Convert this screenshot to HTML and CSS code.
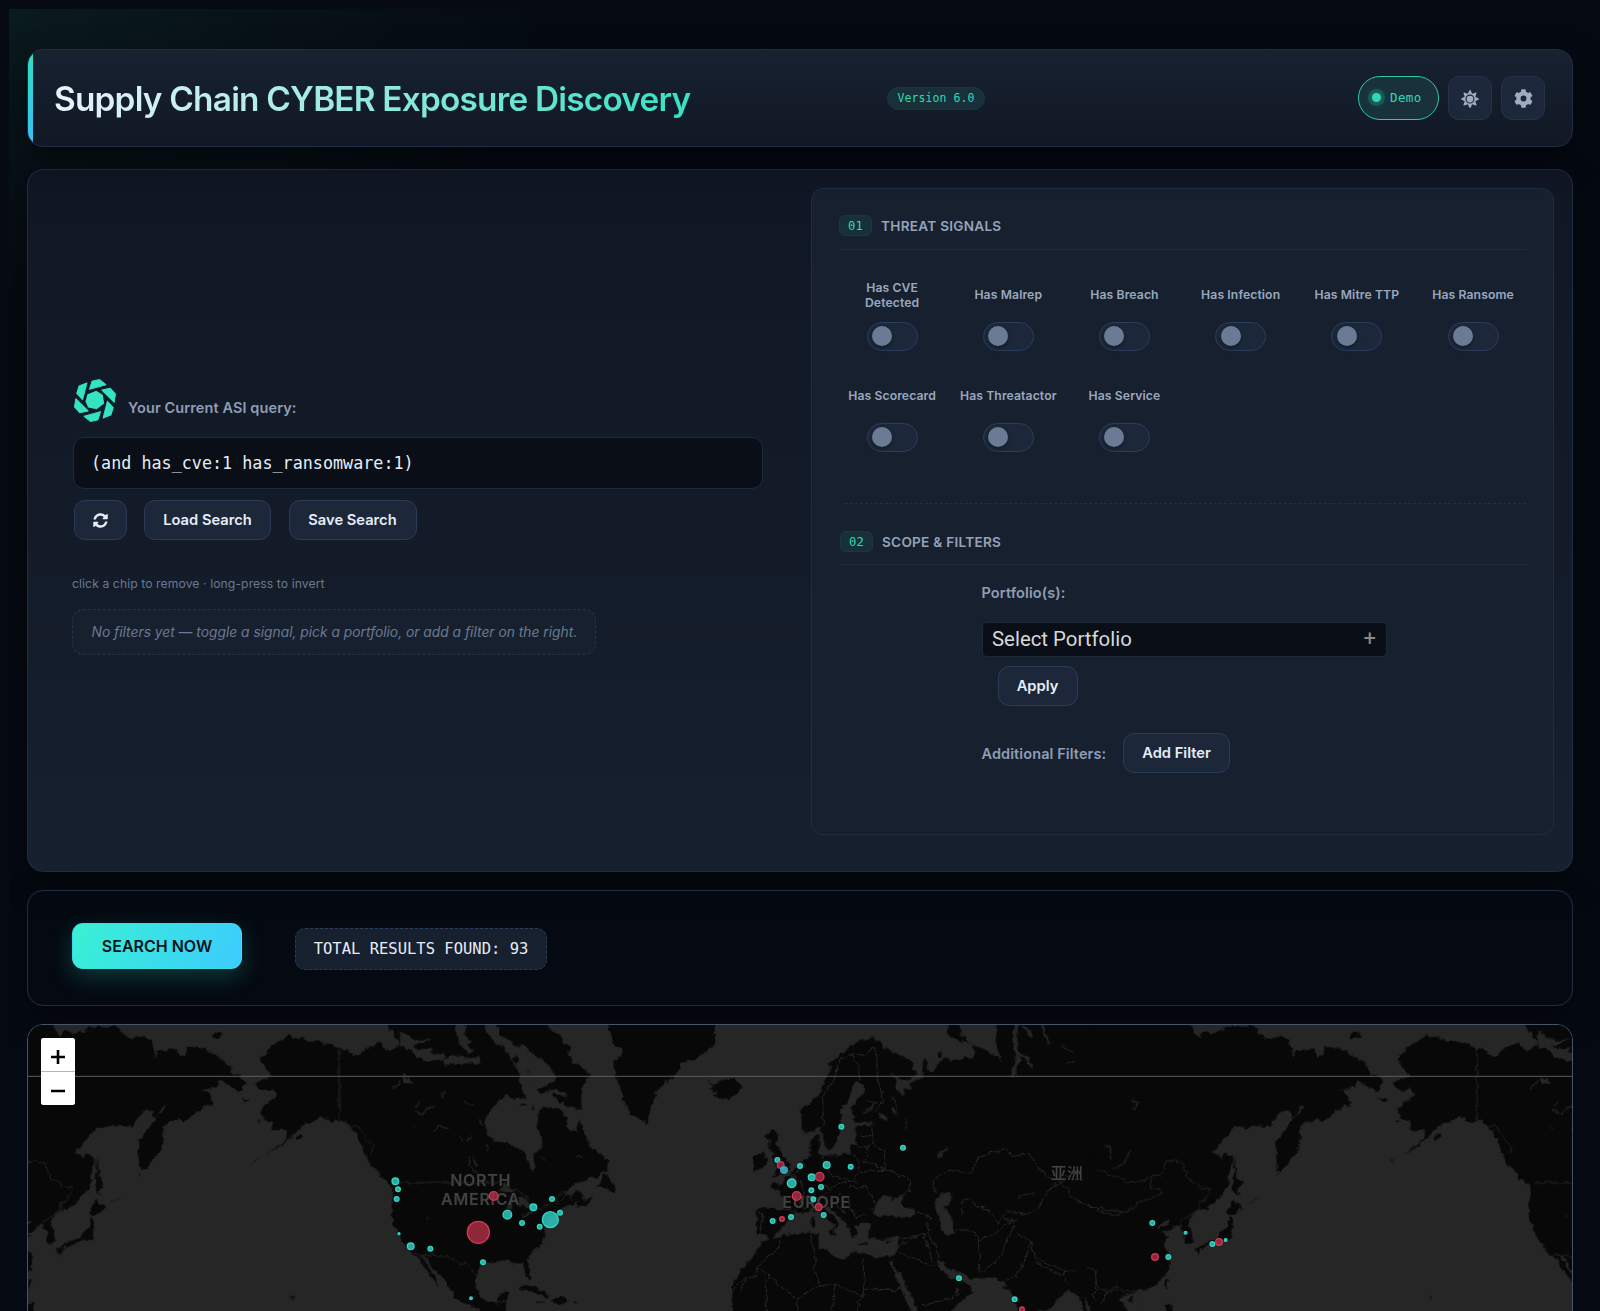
FILE: index.html
```html
<!DOCTYPE html>
<html lang="en">
<head>
<meta charset="utf-8">
<title>Supply Chain CYBER Exposure Discovery</title>
<link rel="stylesheet" href="styles.css">
</head>
<body>
<div class="page">
  <header class="card topbar">
    <h1 class="title">Supply Chain CYBER Exposure Discovery</h1>
    <span class="version">Version 6.0</span>
    <div class="actions">
      <button class="demo"><i class="dot"></i>Demo</button>
      <button class="icon-btn" aria-label="Theme">
        <svg width="18" height="18" viewBox="0 0 512 512"><path fill="currentColor" d="M256 160a96 96 0 1 0 0 192 96 96 0 0 0 0-192zm246 81-95-47 34-101c4-13-8-26-22-22l-101 34-47-95c-6-12-24-12-30 0l-47 95L93 71c-13-4-26 8-22 22l34 101-95 47c-12 6-12 24 0 30l95 47L71 419c-4 13 8 26 22 22l101-34 47 95c6 12 24 12 30 0l47-95 101 34c13 4 26-8 22-22l-34-101 95-47c12-6 12-24 0-30zM346 346a128 128 0 1 1-181-181 128 128 0 0 1 181 181z"/></svg>
      </button>
      <button class="icon-btn" aria-label="Settings">
        <svg width="19" height="19" viewBox="0 0 512 512"><path fill="currentColor" d="M487 316l-42-25c4-23 4-47 0-70l42-25c5-3 8-9 6-14-11-36-30-68-55-95-4-4-10-5-15-2l-42 25c-18-15-39-27-61-35V26c0-6-4-11-10-12-37-8-75-8-110 0-5 1-9 6-9 12v49c-22 8-43 20-61 35L88 85c-5-3-11-2-15 2-25 27-44 59-55 95-2 5 1 11 6 14l42 25c-4 23-4 47 0 70l-42 25c-5 3-8 9-6 14 11 36 30 68 55 95 4 4 10 5 15 2l42-25c18 15 39 27 61 35v49c0 6 4 11 10 12 37 8 75 8 110 0 5-1 9-6 9-12v-49c22-8 43-20 61-35l42 25c5 3 11 2 15-2 25-27 44-59 55-95 2-5-1-11-6-14zM256 336a80 80 0 1 1 0-160 80 80 0 0 1 0 160z"/></svg>
      </button>
    </div>
  </header>

  <main class="card workspace">
    <section class="query">
      <div class="query-head">
        <svg class="logo" viewBox="25 22 134 136" width="44" height="45">
          <g fill="#34e3c2">
            <path id="blade" stroke="#34e3c2" stroke-width="3" stroke-linejoin="round" d="M75 56 83 31 106 26 126 42z"/>
            <use href="#blade" transform="rotate(60 92 90)"/>
            <use href="#blade" transform="rotate(120 92 90)"/>
            <use href="#blade" transform="rotate(180 92 90)"/>
            <use href="#blade" transform="rotate(240 92 90)"/>
            <use href="#blade" transform="rotate(300 92 90)"/>
            <path d="M69 71 96 60 116 73 120 99 97 117 71 111 63 92z"/>
          </g>
        </svg>
        <span class="label">Your Current ASI query:</span>
      </div>
      <div class="query-box">(and has_cve:1 has_ransomware:1)</div>
      <div class="query-buttons">
        <button class="btn refresh" aria-label="Refresh">
          <svg width="15" height="15" viewBox="0 0 512 512"><path fill="currentColor" d="M371 141a160 160 0 0 0-272 75c-1 5-6 9-12 9H30c-8 0-13-7-12-14C39 95 137 8 256 8c67 0 127 26 172 69l35-35c15-15 41-4 41 17v129c0 13-11 24-24 24H351c-21 0-32-26-17-41zM32 300h129c21 0 32 26 17 41l-37 30a160 160 0 0 0 272-75c1-5 6-9 12-9h57c8 0 13 7 12 14-21 116-119 203-238 203-67 0-127-26-172-69l-35 35c-15 15-41 4-41-17V324c0-13 11-24 24-24z"/></svg>
        </button>
        <button class="btn">Load Search</button>
        <button class="btn">Save Search</button>
      </div>
      <p class="hint">click a chip to remove · long-press to invert</p>
      <div class="empty">No filters yet — toggle a signal, pick a portfolio, or add a filter on the right.</div>
    </section>

    <section class="filters">
      <h2 class="section-head"><span class="num">01</span>THREAT SIGNALS</h2>
      <div class="signals">
        <label class="signal"><span>Has CVE Detected</span><i class="toggle"></i></label>
        <label class="signal"><span>Has Malrep</span><i class="toggle"></i></label>
        <label class="signal"><span>Has Breach</span><i class="toggle"></i></label>
        <label class="signal"><span>Has Infection</span><i class="toggle"></i></label>
        <label class="signal"><span>Has Mitre TTP</span><i class="toggle"></i></label>
        <label class="signal"><span>Has Ransome</span><i class="toggle"></i></label>
        <label class="signal"><span>Has Scorecard</span><i class="toggle"></i></label>
        <label class="signal"><span>Has Threatactor</span><i class="toggle"></i></label>
        <label class="signal"><span>Has Service</span><i class="toggle"></i></label>
      </div>
      <hr class="dash">
      <h2 class="section-head second"><span class="num">02</span>SCOPE &amp; FILTERS</h2>
      <div class="scope">
        <span class="label">Portfolio(s):</span>
        <div class="select"><span>Select Portfolio</span><span class="plus">+</span></div>
        <button class="btn apply">Apply</button>
        <div class="more"><span class="label">Additional Filters:</span><button class="btn">Add Filter</button></div>
      </div>
    </section>
  </main>

  <section class="card results">
    <button class="search">SEARCH NOW</button>
    <div class="total">TOTAL RESULTS FOUND: 93</div>
  </section>

  <section class="map">
    <svg class="world" width="1544" height="286" viewBox="84 45 4632 858">
      <defs>
        <filter id="coast" filterUnits="userSpaceOnUse" x="60" y="20" width="4680" height="910" color-interpolation-filters="sRGB">
          <feTurbulence type="fractalNoise" baseFrequency=".055" numOctaves="2" seed="4"/>
          <feDisplacementMap in="SourceGraphic" scale="19" xChannelSelector="R" yChannelSelector="G"/>
        </filter>
        <g id="asia">
          <g class="land" transform="translate(3300)">
            <path d="M-30 20H270L270 40 285 75 297 85 305 65 320 60 330 72 360 68 375 50 430 50 470 50 475 70 500 85 545 78 568 90 572 115 583 148 585 120 640 118 655 138 672 135 670 110 720 115 760 135 800 165 812 198 825 190 850 215 835 245 825 245 800 225 770 210 765 230 730 238 708 243 730 242 745 260 755 288 735 285 700 310 668 335 650 328 625 335 605 345 600 370 603 400 585 430 570 450 555 470 540 488 530 460 528 420 530 395 555 360 585 320 600 305 615 287 603 288 585 320 572 325 572 300 550 300 520 330 515 350 470 345 440 352 405 350 370 390 338 428 355 435 365 445 370 430 395 440 400 455 390 480 385 520 365 555 320 598 295 600 270 625 265 640 275 670 280 695 252 700 255 665 240 655 245 640 225 650 210 665 178 665 180 652 205 640 208 630 180 640 170 655 190 670 205 680 187 697 200 720 212 745 205 780 190 800 170 825 130 840 90 850 75 855 55 870 80 903V930H-30z"/>
            <path d="M405 438 410 500 426 520 410 540 416 557 398 540 402 480zM381 610 400 570 430 595 405 611 390 615zM385 620 395 625 399 655 388 690 360 690 330 705 300 715 296 740 283 720 320 695 350 685 365 665 380 655zM195 838 197 810 208 805 200 835zM195 915V880L212 875 215 915zM82 868 100 858 104 866 92 877zM750 75 765 65 783 74 770 83 752 84zM835 263 855 268 865 273 850 274zM525 500 535 490 537 495zM440 580 480 560 455 575zM985 855 995 862 990 867z"/>
          </g>
          <g class="line" transform="translate(3300)">
            <path d="M-10 480 20 485 25 498 55 500 85 515 130 512 155 500 180 498 192 480 195 455 225 450 250 465 265 505 290 520 305 535 330 530 325 550 310 575 296 575 296 600 240 635M155 505 150 530 180 540 188 550 140 570 110 580 105 595 75 605 45 616-10 600M-10 830 20 845 50 828 70 845 130 840"/>
            <path class="lake" d="M40 478 70 462 93 418M15 405 30 410 35 450M95 270 115 280 100 300"/>
          </g>
        </g>
        <g id="america">
          <path class="land" d="M778 145 800 130 815 105 850 90 868 72 880 85 905 80 925 95 960 95 990 105 1018 115 1040 120 1062 138 1080 135 1095 115 1125 105 1140 95 1150 110 1170 125 1200 100 1185 75 1160 47V20H1640L1650 60 1680 75 1690 100 1715 110 1705 130 1720 155 1770 190 1755 220 1742 235 1745 300 1720 280 1690 245 1640 235 1670 200 1640 160 1600 130 1560 100 1590 170 1580 195 1555 210 1575 262 1540 270 1520 255 1480 285 1458 320 1455 355 1478 388 1510 395 1550 410 1575 430 1585 460 1600 485 1605 470 1600 430 1625 415 1628 390 1610 350 1618 300 1630 290 1680 300 1700 320 1695 340 1712 365 1730 362 1740 330 1755 370 1770 410 1800 430 1825 450 1823 475 1790 500 1730 515 1690 560 1660 595 1700 555 1740 540 1752 570 1780 560 1760 588 1728 593 1735 575 1700 590 1680 600 1650 625 1630 655 1636 680 1625 705 1595 725 1582 740 1590 780 1593 800 1585 808 1570 780 1570 760 1545 760 1520 750 1490 755 1445 760 1430 785 1428 830 1440 855 1460 875 1490 875 1500 850 1528 845 1518 870 1518 920H1490L1430 895 1370 870 1355 845 1325 800 1295 770 1275 740 1262 735 1285 770 1305 800 1315 827 1290 800 1270 770 1260 745 1235 735 1225 718 1200 685 1185 655 1176 630 1175 580 1180 540 1177 530 1145 495 1110 465 1095 430 1070 375 1045 345 1025 332 1000 335 960 318 945 335 915 340 890 365 860 395 830 415 795 435 860 390 862 362 850 358 820 362 815 335 790 330 780 305 795 280 830 258 820 238 780 240 762 220 790 210 815 200 790 165z"/>
          <path class="land" d="M1140 490 1175 510 1192 528 1187 540 1160 515 1140 497zM888 380 905 372 908 382 895 392zM725 265 750 270 740 274zM770 332 785 330 780 338zM755 458 775 445 765 455zM1615 235 1640 225 1655 240 1630 250 1615 245zM1655 250 1700 260 1742 300 1700 290 1665 265zM1592 290 1602 288 1600 303zM1560 285 1575 280 1577 290zM1793 530 1815 490 1830 505 1850 540 1840 550 1820 535zM1555 838 1580 825 1610 835 1650 858 1640 865 1600 845zM1655 865 1690 862 1705 875 1680 880 1655 878zM1612 875h20v5h-20zM1715 875h15v5h-15zM635 75 655 65 670 73 650 84z"/>
          <path class="land" d="M1835 20 1828 60 1840 100 1870 130 1843 155 1848 200 1860 230 1870 270 1890 310 1910 323 1942 340 1955 280 1972 235 2000 215 2030 190 2048 155 2090 147 2120 125 2148 100 2140 20zM2120 208 2145 225 2160 215 2200 203 2225 230 2210 253 2175 268 2145 260 2150 245 2125 238 2142 230z"/>
          <path class="water" d="M1200 60 1235 85 1260 92 1300 85 1270 100 1240 108 1255 120 1300 112 1290 128 1340 130 1330 150 1290 155 1250 140 1230 115 1200 110zM1365 40H1400L1395 70 1415 95 1400 105 1425 120 1410 130 1385 110 1370 80zM1330 150 1360 135 1400 145 1440 140 1445 160 1400 160 1340 165zM1450 40H1490L1500 75 1530 90 1545 110 1570 105 1595 150 1590 185 1565 175 1540 165 1520 120 1490 100 1460 70zM1550 165 1580 180 1590 230 1560 215zM1205 195 1230 205 1240 220 1215 225z"/>
          <path class="land" d="M1535 145 1550 138 1557 155 1545 165zM1505 100 1515 110 1510 125zM1410 70 1425 80 1420 90z"/>
          <path class="lake" d="M1245 305 1270 310 1290 292 1305 290M1260 275 1250 290M1300 362 1320 350 1345 352M1405 445 1415 475 1430 485M1418 445 1430 465M1380 380 1385 395M1415 375 1405 390M1325 260 1335 245M1395 275 1420 285M1625 440 1635 450M1730 440 1750 442M1285 620V625M1180 235 1200 215M1240 350V355M1460 405V420M1440 330 1450 345"/>
          <path class="water" d="M1495 540 1515 525 1545 540 1535 550 1510 545zM1530 560 1540 558 1535 600 1523 598zM1550 562 1570 560 1595 585 1580 595 1560 585zM1562 616 1600 605 1598 612 1572 620zM1600 600 1625 590 1622 598z"/>
          <path class="line" d="M1018 115V331L1035 335 1050 352 1070 345 1090 370 1120 410 1115 430M1190 518H1500L1550 540 1580 560 1600 605 1650 580 1690 545 1712 545 1715 570M1245 733 1325 740 1350 740 1380 765 1400 757 1425 795M1490 885 1495 875 1518 875M1690 550 1720 555"/>
        </g>
      </defs>
      <rect class="sea" x="84" y="45" width="4632" height="858"/>
      <g filter="url(#coast)">
        <g class="land" transform="translate(2220)">
          <path d="M375 92 400 82 425 98 430 112 445 118 470 130 500 145 522 165 525 190 515 207 490 208 460 197 445 190 470 210 465 235 490 258 490 235 515 240 512 220 540 205 550 205 548 150 565 148 560 170 570 190 585 188 590 165 605 158 620 138 640 155 660 145 700 145 708 125 690 100 740 122 785 152 770 110 766 70 782 20H1130V930H1030L1025 880 1010 855 990 840 950 870 920 905H835L820 870 817 842 790 835 800 822 760 803 690 805 665 785 630 780 605 755 592 750 600 775 630 810 650 808 660 795 670 815 700 845 670 870 650 890 630 905V930H540L520 870 490 810 465 770 462 742 470 720 478 680 430 690 388 685 385 660 395 640 360 638 345 650 350 670 340 685 330 660 310 630 265 590 245 582 265 605 295 635 288 655 275 668 285 645 245 615 222 590 200 605 165 605 150 620 135 645 115 660 95 687 72 672 50 675 50 640 50 600 60 590 130 600 138 570 115 545 90 530 100 520 125 525 142 500 165 475 195 445 215 435 210 395 235 370 240 400 232 425 245 437 290 435 330 430 335 405 350 400 345 360 355 350 405 342 375 335 345 335 336 315 338 290 370 250 372 225 345 215 325 270 300 300 303 340 290 395 265 425 250 390 240 350 205 370 185 355 183 295 240 255 255 215 278 170 262 160 290 145 330 110 360 88z"/>
          <path d="M78 688 160 672 240 670 235 710 280 735 310 750 335 725 380 735 410 742 465 738 480 830 525 930H-20L-25 830-5 790 45 735 65 700zM620 20H658L665 75 690 98 655 90 625 75zM75 375 100 362 118 370 105 400 125 430 150 465 140 488 100 500 112 475 95 445 105 430 85 415 90 390zM40 440 70 425 78 455 68 475 42 480zM590 130 605 125 605 140 592 142zM218 405 235 400 235 425zM265 660 288 668 285 680 260 668zM215 625 225 622 224 650 214 650zM218 600 225 600 224 618zM355 697 385 700 380 705 355 700zM432 695 455 690 440 702z"/>
        </g>
        <g class="water" transform="translate(2220)">
          <path d="M400 612 405 585 430 555 455 560 450 572 480 560 500 545 478 582 525 600 515 622 470 622 440 612 415 625zM582 575 610 548 635 550 632 575 613 590 640 630 642 672 615 675 600 650 598 620zM443 752 460 780 480 835 510 890 525 930H545L520 870 490 812 465 775 460 750zM1140 855 1180 845 1200 850V920H1040L1035 860 1060 905 1090 890 1130 915zM415 305 440 320 440 332 420 325zM455 290 475 315 455 305z"/>
          <path class="channel" d="M828 30 825 100 835 140 815 200"/>
          <path class="lake inlet" d="M850 50 875 75M835 140Q865 130 872 170M905 40 925 100M600 425 620 418M600 445V430"/>
          <path class="lake" d="M380 270 410 280 375 300M460 260 470 300M495 330V360M965 110 1000 125M980 155H1005M835 565 850 553 880 552M790 630 820 630M375 310 400 290"/>
        </g>
        <use href="#asia"/>
        <use href="#asia" x="-3413"/>
        <use href="#america"/>
        <use href="#america" x="3413"/>
        <path class="line" transform="translate(2220)" d="M250 350 248 260 280 210 300 150 330 130 355 165 360 210M330 130 375 140 395 110 410 130 412 200 430 270 405 310M335 405 380 410 400 400 395 345M360 375 395 380M325 432 352 440 355 495 335 515 265 490 250 460 250 440M380 410 385 440 370 455 440 480 430 420 405 408M360 485 440 480 510 510 505 545M330 530 380 530 405 580 395 600M270 540 290 520 350 515M190 455 180 480 150 500 180 515 190 545 180 580 200 600M245 520 270 540 250 560 190 560M320 560 330 590 345 620 380 615M300 550 290 590 320 610M60 600 70 620 60 670M120 595 165 603M145 495 170 505M530 600 575 625 560 640 570 680 590 720 595 755M580 545 580 510 630 480 690 490 715 440 800 418 820 440 865 430 910 490 965 515 980 500 1030 510M580 535 590 550M665 620V575L685 568 720 595 745 600 775 640 800 600 850 615 895 600 925 540 960 515 1010 575 1100 600 1150 605M645 660 690 660 715 680 720 790M715 690 760 675 800 640 830 630 790 710 775 750 730 785M830 670 870 695 860 740 830 800 800 810M870 695 890 750 980 785 1010 780M890 760 960 795 985 780M970 785 980 820M1040 770 1065 780 1070 820 1060 860 1085 880 1100 850 1130 840M480 685 520 680 550 670 580 760M480 730 500 735 580 770M470 710 540 675M650 830 655 855 600 875 545 885M370 740V860M370 838H485M225 715 225 795 240 825 285 825 370 860M120 690 110 720 50 770 50 800 20 805 0 845M50 770 170 868 240 825M75 805 80 905M285 825 275 905M20 800-25 845M360 860 355 905M210 675 215 700 225 715M170 868 175 905"/>
      </g>
      <path class="parallel" d="M84 199H4716"/>
      <g class="region">
        <text x="1442" y="529">NORTH</text>
        <text x="1442" y="586">AMERICA</text>
        <text x="2450" y="593">EUROPE</text>
        <text class="cjk" x="3201" y="507">亚洲</text>
      </g>
      <g class="hit">
        <circle cx="1186" cy="514" r="10"/><circle cx="1194" cy="538" r="7"/><circle cx="1190" cy="567" r="7"/><circle cx="1197" cy="671" r="3"/>
        <circle cx="1232" cy="709" r="10"/><circle cx="1291" cy="716" r="7"/><circle cx="1449" cy="757" r="7"/><circle cx="1413" cy="865" r="4"/>
        <circle cx="1522" cy="614" r="13"/><circle cx="1566" cy="639" r="7"/><circle cx="1600" cy="592" r="10"/><circle cx="1656" cy="567" r="7"/>
        <circle cx="1680" cy="608" r="7"/><circle cx="1651" cy="629" r="24"/><circle cx="1619" cy="650" r="7"/>
        <circle cx="2332" cy="450" r="7"/><circle cx="2400" cy="468" r="7"/><circle cx="2480" cy="465" r="10"/><circle cx="2552" cy="470" r="7"/>
        <circle cx="2524" cy="350" r="7"/><circle cx="2709" cy="413" r="7"/><circle cx="2375" cy="520" r="13"/><circle cx="2435" cy="502" r="10"/>
        <circle cx="2434" cy="541" r="7"/><circle cx="2463" cy="531" r="7"/><circle cx="2440" cy="568" r="7"/><circle cx="2471" cy="615" r="7"/>
        <circle cx="2318" cy="633" r="7"/><circle cx="2373" cy="621" r="7"/><circle cx="2877" cy="805" r="7"/><circle cx="3044" cy="868" r="7"/>
        <circle cx="3457" cy="639" r="7"/><circle cx="3557" cy="668" r="4"/><circle cx="3505" cy="741" r="7"/><circle cx="3637" cy="702" r="7"/><circle cx="3677" cy="690" r="4"/>
      </g>
      <g class="alert">
        <circle cx="1435" cy="667" r="33"/><circle cx="1481" cy="558" r="13"/><circle cx="2342" cy="465" r="10"/><circle cx="2390" cy="558" r="13"/>
        <circle cx="2459" cy="500" r="13"/><circle cx="2456" cy="591" r="10"/><circle cx="2346" cy="627" r="7"/><circle cx="3465" cy="741" r="10"/>
        <circle cx="3657" cy="696" r="10"/><circle cx="3066" cy="898" r="7"/>
      </g>
      <circle class="blue" cx="2352" cy="480" r="10"/>
    </svg>
    <div class="zoom">
      <button aria-label="Zoom in"><svg width="14" height="14" viewBox="0 0 14 14"><path d="M7 0v14M0 7h14" stroke="#000" stroke-width="2.6"/></svg></button>
      <button aria-label="Zoom out"><svg width="14" height="14" viewBox="0 0 14 14"><path d="M0 7h14" stroke="#000" stroke-width="2.6"/></svg></button>
    </div>
  </section>
</div>
</body>
</html>
```
FILE: styles.css
```css
* { box-sizing: border-box; }
html { background: #050a13; }
body {
  margin: 9px 0 0 9px;
  height: 1302px;
  overflow: hidden;
  font-family: Inter, sans-serif;
  color: #e6edf7;
  background: radial-gradient(560px 300px at 0 0, #0a1b1d 0, rgba(8, 21, 25, .8) 40%, transparent 100%), #050a12;
}
button { font: inherit; color: inherit; margin: 0; padding: 0; cursor: pointer; }
svg { display: block; }
.page { padding: 40px 27px 0 18px; }
.card {
  border: 1px solid #1f2e44;
  border-radius: 16px;
  box-shadow: 0 12px 32px rgba(0, 0, 0, .45);
}

/* header */
.topbar {
  position: relative;
  display: flex;
  align-items: center;
  height: 98px;
  padding: 0 27px 0 26px;
  overflow: hidden;
  background: linear-gradient(180deg, #172230, #111725);
}
.topbar::before {
  content: "";
  position: absolute;
  inset: 0 auto 0 0;
  width: 4.5px;
  background: linear-gradient(180deg, #2fe0bf, #38bdf8);
}
.title {
  width: 833px;
  margin: 0;
  padding-top: 2px;
  font-size: 33.4px;
  font-weight: 600;
  letter-spacing: -.8px;
  line-height: 44px;
  white-space: nowrap;
  background: linear-gradient(110deg, #eef3fb 0, #2fe0bf 636px);
  -webkit-background-clip: text;
  background-clip: text;
  color: transparent;
}
.version {
  padding: 3px 9.5px;
  border: 1px solid #1f3440;
  border-radius: 12px;
  background: #17303a;
  color: #2fd9b4;
  font: 11.5px/15px "DejaVu Sans Mono", monospace;
  letter-spacing: .08px;
}
.actions { display: flex; gap: 9px; margin-left: auto; }
.demo {
  display: flex;
  align-items: center;
  gap: 9px;
  width: 81px;
  height: 44px;
  padding: 0 0 1px 13px;
  border: 1.5px solid #2bc9ab;
  border-radius: 22px;
  background: #18313b;
  color: #2fd9b4;
  font: 12.5px "DejaVu Sans Mono", monospace;
  letter-spacing: .4px;
}
.dot {
  width: 9px;
  height: 9px;
  border-radius: 50%;
  background: #2fd9b4;
  box-shadow: 0 0 0 4px rgba(47, 217, 180, .18), 0 0 10px rgba(47, 217, 180, .45);
}
.icon-btn {
  display: grid;
  place-items: center;
  width: 44px;
  height: 44px;
  border: 1px solid #24334a;
  border-radius: 11px;
  background: #1c283a;
  color: #9dabc3;
}
.icon-btn svg { margin-top: 1px; }

/* workspace */
.workspace {
  display: grid;
  grid-template-columns: 1fr 743px;
  height: 703px;
  margin-top: 22px;
  padding: 18px;
  background: linear-gradient(180deg, #101624, #16202e);
}
.query { padding: 190px 48px 0 26px; }
.query-head { display: flex; align-items: flex-start; gap: 11px; }
.logo { margin-left: 1px; }
.label { font-size: 14.5px; font-weight: 600; letter-spacing: .1px; color: #8f9db5; }
.query-head .label { margin-top: 21px; }
.query-box {
  width: 690px;
  height: 52px;
  margin: 14px 0 0 1px;
  padding: 0 17px;
  border: 1.5px solid #1d2a3e;
  border-radius: 11px;
  background: #0a0e17;
  font: 16.75px/50px "DejaVu Sans Mono", monospace;
}
.query-buttons { display: flex; gap: 17.5px; margin: 11px 0 0 2px; }
.btn {
  height: 40px;
  padding: 0 18px;
  border: 1.5px solid #2a3b58;
  border-radius: 11px;
  background: #1c283a;
  font-size: 14.7px;
  font-weight: 600;
  line-height: 38px;
  white-space: nowrap;
}
.refresh { display: grid; place-items: center; width: 52.5px; padding: 0; }
.query-buttons .btn:nth-child(2) { width: 127px; padding: 0; }
.query-buttons .btn:nth-child(3) { width: 128px; padding: 0; }
.hint { margin: 36px 0 0; font-size: 12.2px; line-height: 16px; letter-spacing: .08px; color: #6b7990; }
.empty {
  width: 524px;
  height: 46px;
  margin-top: 17px;
  padding-left: 18.5px;
  border: 1px dashed #233247;
  border-radius: 11px;
  background: #17202e;
  color: #6b7990;
  font-size: 13.8px;
  font-style: italic;
  line-height: 44px;
  white-space: nowrap;
}
.filters {
  height: 647px;
  padding: 26px 26px 0 27px;
  border: 1px solid #1f2d42;
  border-radius: 12px;
  background: #17202e;
}
.section-head {
  display: flex;
  align-items: flex-start;
  gap: 9px;
  height: 35px;
  margin: 0;
  border-bottom: 1.5px solid #1f2c40;
  color: #95a3ba;
  font-size: 13.6px;
  font-weight: 600;
  line-height: 23px;
  letter-spacing: .26px;
}
.num {
  width: 33px;
  height: 21px;
  border: 1px solid #1c373f;
  border-radius: 6px;
  background: #183139;
  color: #2fd9b4;
  font: 12.2px/20px "DejaVu Sans Mono", monospace;
  text-align: center;
}
.signals {
  display: grid;
  grid-template-columns: repeat(6, 116.2px);
  grid-auto-rows: 101px;
  margin: 23px 0 0 -5px;
}
.signal { display: flex; flex-direction: column; align-items: center; }
.signal span {
  display: grid;
  align-items: center;
  max-width: 112px;
  height: 43px;
  font-size: 12.2px;
  font-weight: 600;
  letter-spacing: .1px;
  line-height: 15px;
  text-align: center;
  color: #9aa8bf;
}
.signal:first-child span { max-width: 70px; }
.toggle {
  width: 51px;
  height: 29px;
  margin-top: 6px;
  padding: 3px 4.5px;
  border: 1.5px solid #2a3d5c;
  border-radius: 15px;
  background: #1c283a;
}
.toggle::before {
  content: "";
  display: block;
  width: 20px;
  height: 20px;
  border-radius: 50%;
  background: #6b7b96;
  box-shadow: 0 2px 4px rgba(0, 0, 0, .35);
}
.dash { margin: 28px 1px 0 6px; border: 0; border-top: 1px dashed #223145; }
.second { height: 34px; margin: 27px -1px 0 1px; }
.scope { padding: 17px 0 0 142.5px; }
.scope > .label { display: block; line-height: 22px; }
.select {
  display: flex;
  justify-content: space-between;
  width: 405px;
  height: 35px;
  margin-top: 18px;
  padding: 0 9.5px;
  border: 1px solid #1c2838;
  border-radius: 5px;
  background: #0a0e16;
  color: #d8d8d6;
  font: 20.4px/33px Roboto, sans-serif;
}
.plus { color: #8a8a88; line-height: 31px; font-size: 22px; }
.apply { display: block; width: 80px; margin: 9px 0 0 16px; }
.more { display: flex; align-items: center; gap: 17px; margin-top: 27px; }

/* results */
.results {
  display: flex;
  align-items: flex-start;
  height: 116px;
  margin-top: 18px;
  padding: 32px 44px;
}
.search {
  width: 170px;
  height: 46px;
  border: 1px solid rgba(60, 225, 225, .6);
  border-radius: 11px;
  background: linear-gradient(120deg, #38f2d2, #3ccbff);
  box-shadow: 0 8px 22px rgba(45, 224, 190, .22);
  color: #07131a;
  font-size: 16px;
  font-weight: 600;
}
.total {
  margin: 5px 0 0 53px;
  width: 252px;
  height: 42px;
  border: 1px dashed #2b3b58;
  border-radius: 10px;
  background: #17202e;
  font: 15.5px/41px "DejaVu Sans Mono", monospace;
  text-align: center;
  white-space: nowrap;
}

/* map */
.map {
  position: relative;
  height: 330px;
  margin-top: 18px;
  border: 1px solid #46556a;
  border-radius: 16px;
  overflow: hidden;
  background: #262626;
}
.sea, .water { fill: #262626; }
.land { fill: #080808; }
.line { fill: none; stroke: #262626; stroke-width: 3; stroke-linejoin: round; }
.lake { fill: none; stroke: #262626; stroke-width: 4; stroke-linecap: round; }
.inlet { stroke-width: 7; }
.channel { fill: none; stroke: #262626; stroke-width: 13; stroke-linejoin: round; }
.parallel { stroke: #5d5d5d; stroke-width: 3; }
.region {
  fill: #414141;
  stroke: #151515;
  stroke-width: 2;
  paint-order: stroke;
  font: 600 48px Inter, "Noto Sans CJK SC", sans-serif;
  letter-spacing: 2.2px;
  text-anchor: middle;
}
.cjk { font-family: "Noto Sans CJK SC", sans-serif; font-weight: 500; font-size: 47px; letter-spacing: 1.5px; }
.hit, .alert, .blue { fill-opacity: .82; stroke-width: 4; }
.hit { fill: #31cfc4; stroke: #35d6c6; }
.alert { fill: #ac2e44; stroke: #d63754; }
.blue { fill: #37c5d6; stroke: #349fd4; }
.zoom {
  position: absolute;
  top: 13px;
  left: 13px;
  width: 34px;
  height: 67px;
  border-radius: 3px;
  overflow: hidden;
  background: #fff;
}
.zoom button {
  display: grid;
  place-items: center;
  width: 34px;
  height: 33px;
  padding-top: 4px;
  border: 0;
  background: #fff;
}
.zoom button:first-child { height: 34px; border-bottom: 1px solid #b5b5b5; }
```
